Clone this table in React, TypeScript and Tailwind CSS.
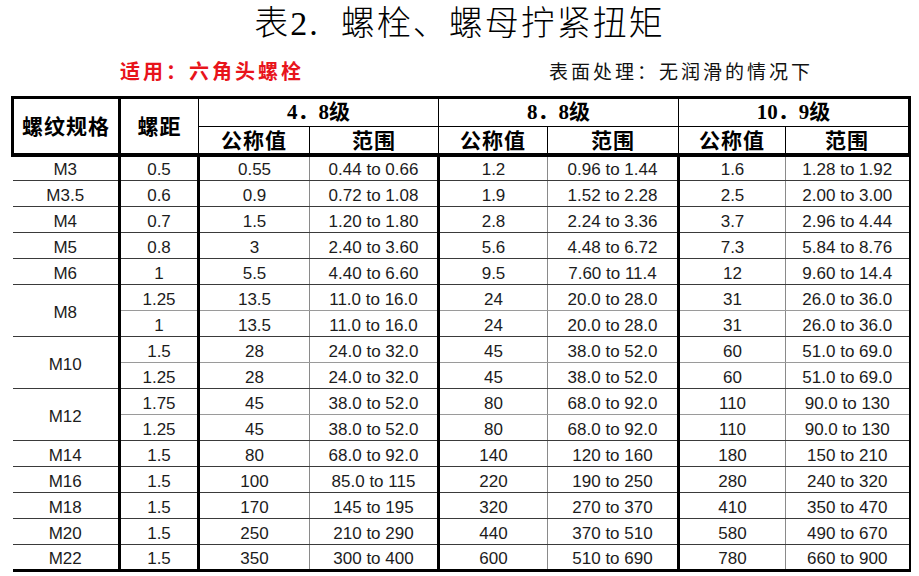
import React from "react"

type Row = {
  spec?: string
  span?: number
  pitch: string
  v: [string, string, string, string, string, string]
  sub?: boolean
}

const rows: Row[] = [
  { spec: "M3", pitch: "0.5", v: ["0.55", "0.44 to 0.66", "1.2", "0.96 to 1.44", "1.6", "1.28 to 1.92"] },
  { spec: "M3.5", pitch: "0.6", v: ["0.9", "0.72 to 1.08", "1.9", "1.52 to 2.28", "2.5", "2.00 to 3.00"] },
  { spec: "M4", pitch: "0.7", v: ["1.5", "1.20 to 1.80", "2.8", "2.24 to 3.36", "3.7", "2.96 to 4.44"] },
  { spec: "M5", pitch: "0.8", v: ["3", "2.40 to 3.60", "5.6", "4.48 to 6.72", "7.3", "5.84 to 8.76"] },
  { spec: "M6", pitch: "1", v: ["5.5", "4.40 to 6.60", "9.5", "7.60 to 11.4", "12", "9.60 to 14.4"] },
  { spec: "M8", span: 2, pitch: "1.25", v: ["13.5", "11.0 to 16.0", "24", "20.0 to 28.0", "31", "26.0 to 36.0"] },
  { pitch: "1", sub: true, v: ["13.5", "11.0 to 16.0", "24", "20.0 to 28.0", "31", "26.0 to 36.0"] },
  { spec: "M10", span: 2, pitch: "1.5", v: ["28", "24.0 to 32.0", "45", "38.0 to 52.0", "60", "51.0 to 69.0"] },
  { pitch: "1.25", sub: true, v: ["28", "24.0 to 32.0", "45", "38.0 to 52.0", "60", "51.0 to 69.0"] },
  { spec: "M12", span: 2, pitch: "1.75", v: ["45", "38.0 to 52.0", "80", "68.0 to 92.0", "110", "90.0 to 130"] },
  { pitch: "1.25", sub: true, v: ["45", "38.0 to 52.0", "80", "68.0 to 92.0", "110", "90.0 to 130"] },
  { spec: "M14", pitch: "1.5", v: ["80", "68.0 to 92.0", "140", "120 to 160", "180", "150 to 210"] },
  { spec: "M16", pitch: "1.5", v: ["100", "85.0 to 115", "220", "190 to 250", "280", "240 to 320"] },
  { spec: "M18", pitch: "1.5", v: ["170", "145 to 195", "320", "270 to 370", "410", "350 to 470"] },
  { spec: "M20", pitch: "1.5", v: ["250", "210 to 290", "440", "370 to 510", "580", "490 to 670"] },
  { spec: "M22", pitch: "1.5", v: ["350", "300 to 400", "600", "510 to 690", "780", "660 to 900"] },
]

const App = () => {
  return (
    <div className="w-[919px] h-[576px] bg-white overflow-hidden text-black">
      <h1 className="pt-[2px] text-center text-[34px] leading-[44px] font-light font-['Liberation_Serif','Noto_Sans_CJK_SC',serif] tracking-[2px]">
        表2.&nbsp;&nbsp;螺栓、螺母拧紧扭矩
      </h1>

      <div className="flex items-center h-[50px] font-['Noto_Sans_CJK_SC',sans-serif]">
        <span className="ml-[120px] text-[20px] font-bold text-[#e8141b] tracking-[3px]">
          适用：六角头螺栓
        </span>
        <span className="ml-[245px] text-[19px] tracking-[3px] text-[#111]">
          表面处理：无润滑的情况下
        </span>
      </div>

      <table className="ml-[11px] w-[897px] table-fixed border-collapse">
        <colgroup>
          <col className="w-[107px]" />
          <col className="w-[79px]" />
          <col className="w-[111px]" />
          <col className="w-[129px]" />
          <col className="w-[109px]" />
          <col className="w-[131px]" />
          <col className="w-[107px]" />
          <col className="w-[124px]" />
        </colgroup>
        <thead className="font-['Liberation_Serif','Noto_Sans_CJK_SC',serif] font-bold text-[21px] leading-none">
          <tr className="h-[29px]">
            <th rowSpan={2} className="border-[3px] border-b-[4px] border-black tracking-[1px] font-['Noto_Sans_CJK_SC',sans-serif]">
              螺纹规格
            </th>
            <th rowSpan={2} className="border-t-[3px] border-b-[4px] border-x border-black tracking-[1px] font-['Noto_Sans_CJK_SC',sans-serif]">
              螺距
            </th>
            <th colSpan={2} className="border-t-[3px] border-x border-b border-black">
              4．8级
            </th>
            <th colSpan={2} className="border-t-[3px] border-x border-b border-black">
              8．8级
            </th>
            <th colSpan={2} className="border-t-[3px] border-r-[3px] border-l border-b border-black">
              10．9级
            </th>
          </tr>
          <tr className="h-[28px] font-['Noto_Sans_CJK_SC',sans-serif] tracking-[1px]">
            <th className="border border-b-[4px] border-black">公称值</th>
            <th className="border border-b-[4px] border-black">范围</th>
            <th className="border border-b-[4px] border-black">公称值</th>
            <th className="border border-b-[4px] border-black">范围</th>
            <th className="border border-b-[4px] border-black">公称值</th>
            <th className="border border-r-[3px] border-b-[4px] border-black">范围</th>
          </tr>
        </thead>
        <tbody className="font-['Liberation_Sans',Arial,sans-serif] text-[17px] leading-none text-[#1c1c1c] text-center">
          {rows.map((r, i) => {
            const last = i === rows.length - 1
            const next = rows[i + 1]
            const lineBelow = last
              ? "border-b-[3px] border-b-black"
              : next?.sub
                ? "border-b border-b-[#9a9a9a]"
                : "border-b border-b-[#3a3a3a]"
            return (
              <tr key={i} className="h-[26px]">
                {r.spec !== undefined && (
                  <td
                    rowSpan={r.span}
                    className={`pt-[3px] border-r-[3px] border-r-black ${
                      r.span ? "border-b border-b-[#3a3a3a]" : lineBelow
                    }`}
                  >
                    {r.spec}
                  </td>
                )}
                <td className={`pt-[3px] border-r-[3px] border-r-black ${lineBelow}`}>{r.pitch}</td>
                <td className={`pt-[3px] border-r border-r-[#8a8a8a] ${lineBelow}`}>{r.v[0]}</td>
                <td className={`pt-[3px] border-r-[3px] border-r-black ${lineBelow}`}>{r.v[1]}</td>
                <td className={`pt-[3px] border-r border-r-[#8a8a8a] ${lineBelow}`}>{r.v[2]}</td>
                <td className={`pt-[3px] border-r-[3px] border-r-black ${lineBelow}`}>{r.v[3]}</td>
                <td className={`pt-[3px] border-r border-r-[#8a8a8a] ${lineBelow}`}>{r.v[4]}</td>
                <td className={`pt-[3px] border-r-[2px] border-r-black ${lineBelow}`}>{r.v[5]}</td>
              </tr>
            )
          })}
        </tbody>
      </table>
    </div>
  )
}

export default App
